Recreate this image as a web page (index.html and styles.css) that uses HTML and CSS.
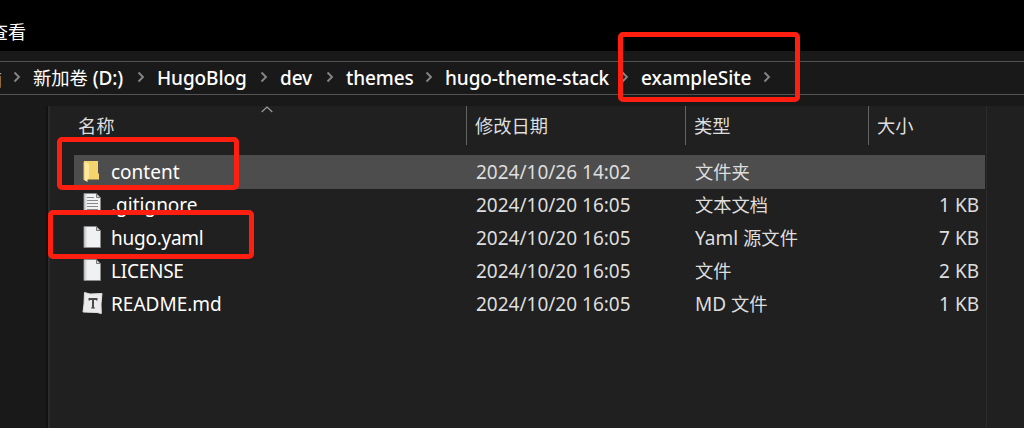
FILE: index.html
```html
<!DOCTYPE html>
<html lang="zh-CN">
<head>
<meta charset="utf-8">
<title>exampleSite</title>
<link rel="stylesheet" href="styles.css">
</head>
<body>
<svg class="defs" width="0" height="0">
  <defs>
    <symbol id="chev" viewBox="0 0 8 12"><path d="M1.500 1.500 6 6 1.500 10.500" fill="none" stroke="#858585" stroke-width="1.900"/></symbol>
    <symbol id="page" viewBox="0 0 24 24">
      <path d="M3 1.500H15.500L19.500 5.500V22.500H3z" fill="#eff1f2" stroke="#8b8b8b"/>
      <path d="M4 2h1.500v20H4z" fill="#d4d6d8"/>
      <path d="M15.500 1.500 19.500 5.500H15.500z" fill="#cfcfcf" stroke="#777"/>
    </symbol>
  </defs>
</svg>
<div class="window">
  <header class="ribbon"><span class="tab">查看</span></header>
  <nav class="address">
    <div class="crumb c-pc"><span class="cjk">脑</span><svg class="chev"><use href="#chev"/></svg></div>
    <div class="crumb c-drive"><span><span class="cjk">新加卷</span> (D:)</span><svg class="chev"><use href="#chev"/></svg></div>
    <div class="crumb c-blog"><span>HugoBlog</span><svg class="chev"><use href="#chev"/></svg></div>
    <div class="crumb c-dev"><span>dev</span><svg class="chev"><use href="#chev"/></svg></div>
    <div class="crumb c-themes"><span>themes</span><svg class="chev"><use href="#chev"/></svg></div>
    <div class="crumb c-stack"><span>hugo-theme-stack</span><svg class="chev"><use href="#chev"/></svg></div>
    <div class="crumb c-site"><span>exampleSite</span><svg class="chev"><use href="#chev"/></svg></div>
  </nav>
  <main class="main">
    <aside class="sidebar"></aside>
    <section class="files">
      <div class="head">
        <div class="th th-name cjk">名称<svg class="sort" viewBox="0 0 12 7"><path d="M.7 6 6 1 11.300 6" fill="none" stroke="#a0a0a0" stroke-width="1.100"/></svg></div>
        <div class="th cjk">修改日期</div>
        <div class="th cjk">类型</div>
        <div class="th cjk">大小</div>
      </div>
      <div class="row selected">
        <svg class="icon" viewBox="0 0 24 24"><path d="M3 2H17V14l1 1v5.500H3z" fill="#f5d36d"/><path d="M3 2.500 8 5V19l-1.500 1.500V23L3 21z" fill="#ffe8a0"/><path d="M3 3v18" stroke="#e6c466"/></svg>
        <span class="name">content</span><span class="date">2024/10/26 14:02</span><span class="kind"><span class="cjk">文件夹</span></span><span class="size"></span>
      </div>
      <div class="row">
        <svg class="icon" viewBox="0 0 24 24"><use href="#page"/><path d="M6 5.500h7M6 8.500h11M6 11.500h11M6 14.500h11M6 17.500h11M6 20.500h11" stroke="#8a8a8a" stroke-width="1.200"/></svg>
        <span class="name">.gitignore</span><span class="date">2024/10/20 16:05</span><span class="kind"><span class="cjk">文本文档</span></span><span class="size">1 KB</span>
      </div>
      <div class="row">
        <svg class="icon" viewBox="0 0 24 24"><use href="#page"/></svg>
        <span class="name tight">hugo.yaml</span><span class="date">2024/10/20 16:05</span><span class="kind">Yaml <span class="cjk">源文件</span></span><span class="size">7 KB</span>
      </div>
      <div class="row">
        <svg class="icon" viewBox="0 0 24 24"><use href="#page"/></svg>
        <span class="name tight">LICENSE</span><span class="date">2024/10/20 16:05</span><span class="kind"><span class="cjk">文件</span></span><span class="size">2 KB</span>
      </div>
      <div class="row">
        <svg class="icon" viewBox="0 0 24 24"><path d="M3.500 1.500 9 3l12-.5L20 13l.3 9.500L16 21.500 2 21l1-8z" fill="#ececec" stroke="#ddd" stroke-linejoin="round"/><path d="M7.500 7v2.500H9V9h2v7.500h-1v1h4v-1h-1V9h2v.5h1.500V7z" fill="#4a4a4a"/></svg>
        <span class="name">README.md</span><span class="date">2024/10/20 16:05</span><span class="kind">MD <span class="cjk">文件</span></span><span class="size">1 KB</span>
      </div>
    </section>
    <aside class="preview"></aside>
  </main>
  <div class="mark mark-site"></div>
  <div class="mark mark-content"></div>
  <div class="mark mark-yaml"></div>
</div>
</body>
</html>
```
FILE: styles.css
```css
* { box-sizing: border-box; }
body { margin: 0; background: #191919; color: #fff; font: 19px/33px "Noto Sans", "Noto Sans CJK SC", sans-serif; }
.defs { position: absolute; }
.window { position: relative; width: 1024px; height: 428px; overflow: hidden; display: flex; flex-direction: column; white-space: nowrap; }
.cjk { font-family: "Noto Sans CJK SC", sans-serif; font-size: 18.3px; }
.ribbon { flex: none; height: 51px; padding-top: 15px; background: #000; }
.tab { display: block; width: 26px; direction: rtl; font: 18px/33px "Noto Sans CJK SC", sans-serif; }
.address { flex: none; display: flex; height: 34px; margin: 10px 0 11px; border: solid #535353; border-width: 1px 0; font-weight: 500; line-height: 32px; letter-spacing: -.1px; }
.address .cjk { font-weight: 400; line-height: 30px; letter-spacing: 0; }
.crumb { display: flex; flex: none; align-items: center; justify-content: space-between; padding-right: 12px; }
.chev { flex: none; width: 8px; height: 12px; margin-bottom: 2px; }
.c-pc { width: 33px; }
.c-pc .cjk { width: 2px; direction: rtl; overflow: hidden; color: #aaa; }
.c-drive { width: 124px; }
.c-blog { width: 123px; }
.c-dev { width: 66px; }
.c-themes { width: 99px; }
.c-stack { width: 196px; }
.c-site { width: 142px; }
.main { flex: 1; display: flex; min-height: 0; }
.sidebar { width: 48px; border-right: 2px solid #121212; }
.files { width: 938px; border-left: 2px solid #2b2b2b; background: #202020; }
.preview { flex: 1; border-left: 1px solid #2b2b2b; background: #202020; }
.head { display: grid; grid-template-columns: 416px 219px 183px 118px; height: 39px; margin-bottom: 10px; color: #dedede; font-size: 18.3px; line-height: 39px; }
.th { padding-left: 8px; border-left: 1px solid #636363; }
.th-name { display: flex; align-items: flex-start; padding-left: 28px; border-left: 0; }
.sort { width: 12px; height: 7px; margin-left: 146px; }
.row { display: grid; grid-template-columns: 37px 365px 219px 220px 64px; width: 911px; height: 33px; margin-left: 24px; color: #dedede; }
.row.selected { height: 34px; margin-bottom: -1px; background: #4d4d4d; }
.icon { width: 24px; height: 24px; margin: 4px 0 0 7px; }
.name, .date, .size { padding-top: 1px; }
.name { color: #fff; }
.tight { letter-spacing: -.25px; }
.size { text-align: right; }
.mark { position: absolute; border: 5px solid #ff1f10; border-radius: 5px; }
.mark-site { left: 618px; top: 32px; width: 182px; height: 70px; }
.mark-content { left: 57px; top: 137px; width: 182px; height: 53px; }
.mark-yaml { left: 48px; top: 210px; width: 206px; height: 49px; }
```
